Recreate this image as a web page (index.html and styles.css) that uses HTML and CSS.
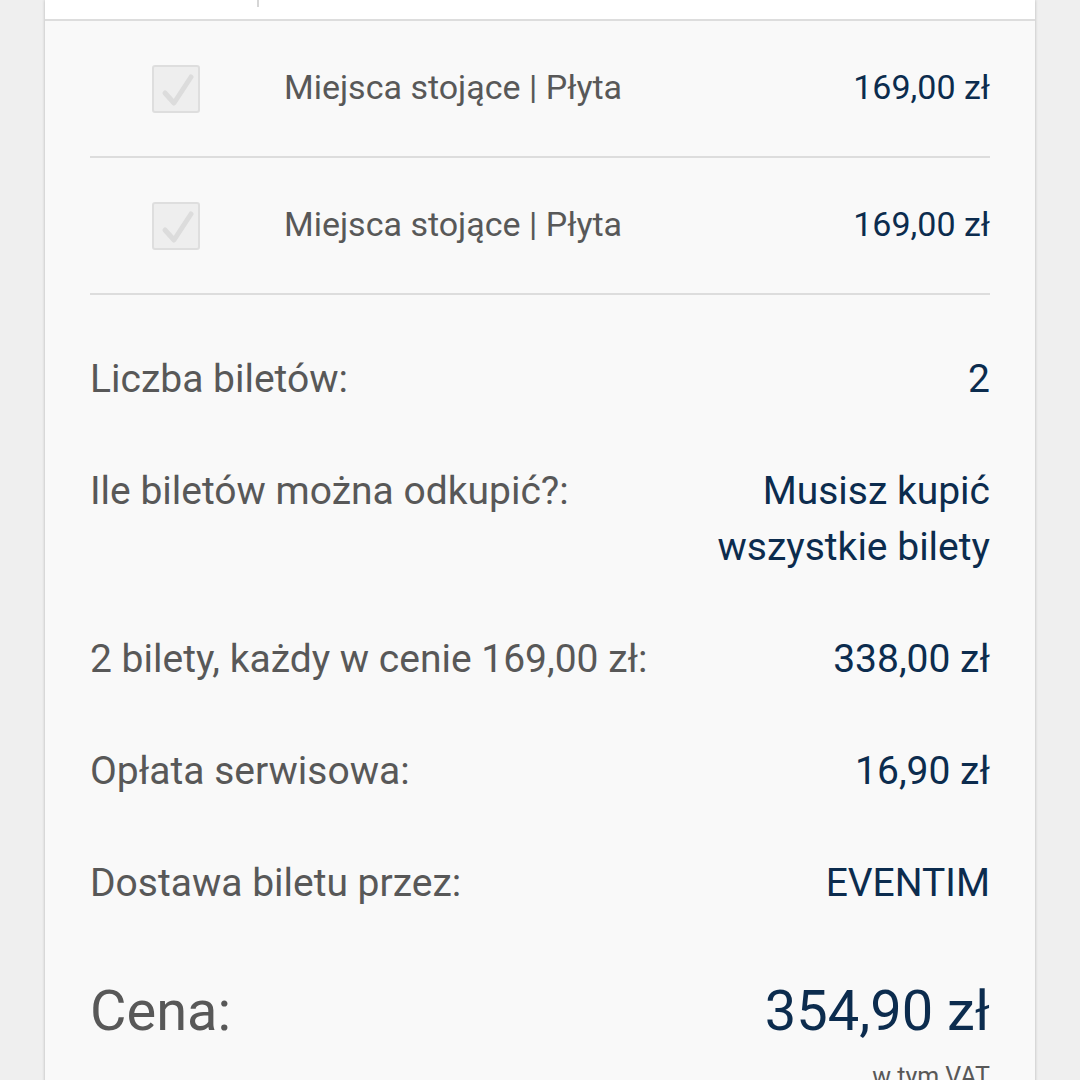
FILE: index.html
```html
<!DOCTYPE html>
<html lang="pl">
<head>
  <meta charset="UTF-8">
  <meta name="viewport" content="width=device-width, initial-scale=1">
  <title>Koszyk</title>
  <link rel="stylesheet" href="styles.css">
</head>
<body>
  <div class="panel">
    <!-- Górny pasek (fragment zakładek) -->
    <div class="tabs">
      <div class="tab"></div>
    </div>

    <div class="content">
      <!-- Lista biletów -->
      <div class="ticket">
        <div class="check">
          <svg viewBox="0 0 48 48" width="48" height="48">
            <path d="M13 28 L22 38 L39 12" fill="none" stroke="#dcdcdc" stroke-width="5" stroke-linecap="round" stroke-linejoin="round"/>
          </svg>
        </div>
        <div class="ticket-name">Miejsca stojące | Płyta</div>
        <div class="ticket-price">169,00 zł</div>
      </div>
      <div class="ticket">
        <div class="check">
          <svg viewBox="0 0 48 48" width="48" height="48">
            <path d="M13 28 L22 38 L39 12" fill="none" stroke="#dcdcdc" stroke-width="5" stroke-linecap="round" stroke-linejoin="round"/>
          </svg>
        </div>
        <div class="ticket-name">Miejsca stojące | Płyta</div>
        <div class="ticket-price">169,00 zł</div>
      </div>

      <!-- Podsumowanie -->
      <div class="summary">
        <div class="row">
          <div class="label">Liczba biletów:</div>
          <div class="value">2</div>
        </div>
        <div class="row">
          <div class="label">Ile biletów można odkupić?:</div>
          <div class="value">Musisz kupić<br>wszystkie bilety</div>
        </div>
        <div class="row">
          <div class="label">2 bilety, każdy w cenie 169,00 zł:</div>
          <div class="value">338,00 zł</div>
        </div>
        <div class="row">
          <div class="label">Opłata serwisowa:</div>
          <div class="value">16,90 zł</div>
        </div>
        <div class="row">
          <div class="label">Dostawa biletu przez:</div>
          <div class="value">EVENTIM</div>
        </div>
        <div class="row total">
          <div class="label">Cena:</div>
          <div class="value">354,90 zł</div>
        </div>
        <div class="vat">w tym VAT</div>
      </div>
    </div>
  </div>
</body>
</html>
```

FILE: styles.css
```css
/* Ogólne */
body {
    margin: 0;
    background: #efefef;
    font-family: Roboto, 'Noto Sans', sans-serif;
    color: #585858;
}

.panel {
    margin: 0 45px;
    background: #f9f9f9;
    min-height: 1080px;
    box-shadow: 0 0 3px rgba(0, 0, 0, 0.25);
}

/* Zakładki */
.tabs {
    height: 19px;
    background: #ffffff;
    border-bottom: 2px solid #dddddd;
}

.tab {
    width: 212px;
    height: 7px;
    border-right: 2px solid #d6d6d6;
}

.content {
    padding: 0 45px;
}

/* Bilety */
.ticket {
    display: flex;
    align-items: center;
    height: 135px;
    border-bottom: 2px solid #dddddd;
}

.check {
    width: 44px;
    height: 44px;
    margin-left: 62px;
    margin-right: 84px;
    background: #eeeeee;
    border: 2px solid #dedede;
    border-radius: 3px;
    position: relative;
}

.check svg {
    position: absolute;
    left: -2px;
    top: -2px;
}

.ticket-name {
    flex: 1;
    font-size: 34px;
    margin-top: -4px;
}

.ticket-price {
    font-size: 34px;
    margin-top: -4px;
    color: #0c2c4e;
}

/* Podsumowanie */
.summary {
    padding-top: 56px;
}

.row {
    display: flex;
    justify-content: space-between;
    font-size: 39px;
    line-height: 56px;
    margin-bottom: 56px;
}

.row .value {
    text-align: right;
    color: #0c2c4e;
}

.row.total {
    font-size: 56px;
    line-height: 88px;
    margin-bottom: 0;
}

.vat {
    text-align: right;
    font-size: 25px;
    line-height: 30px;
    margin-top: 7px;
}
```
